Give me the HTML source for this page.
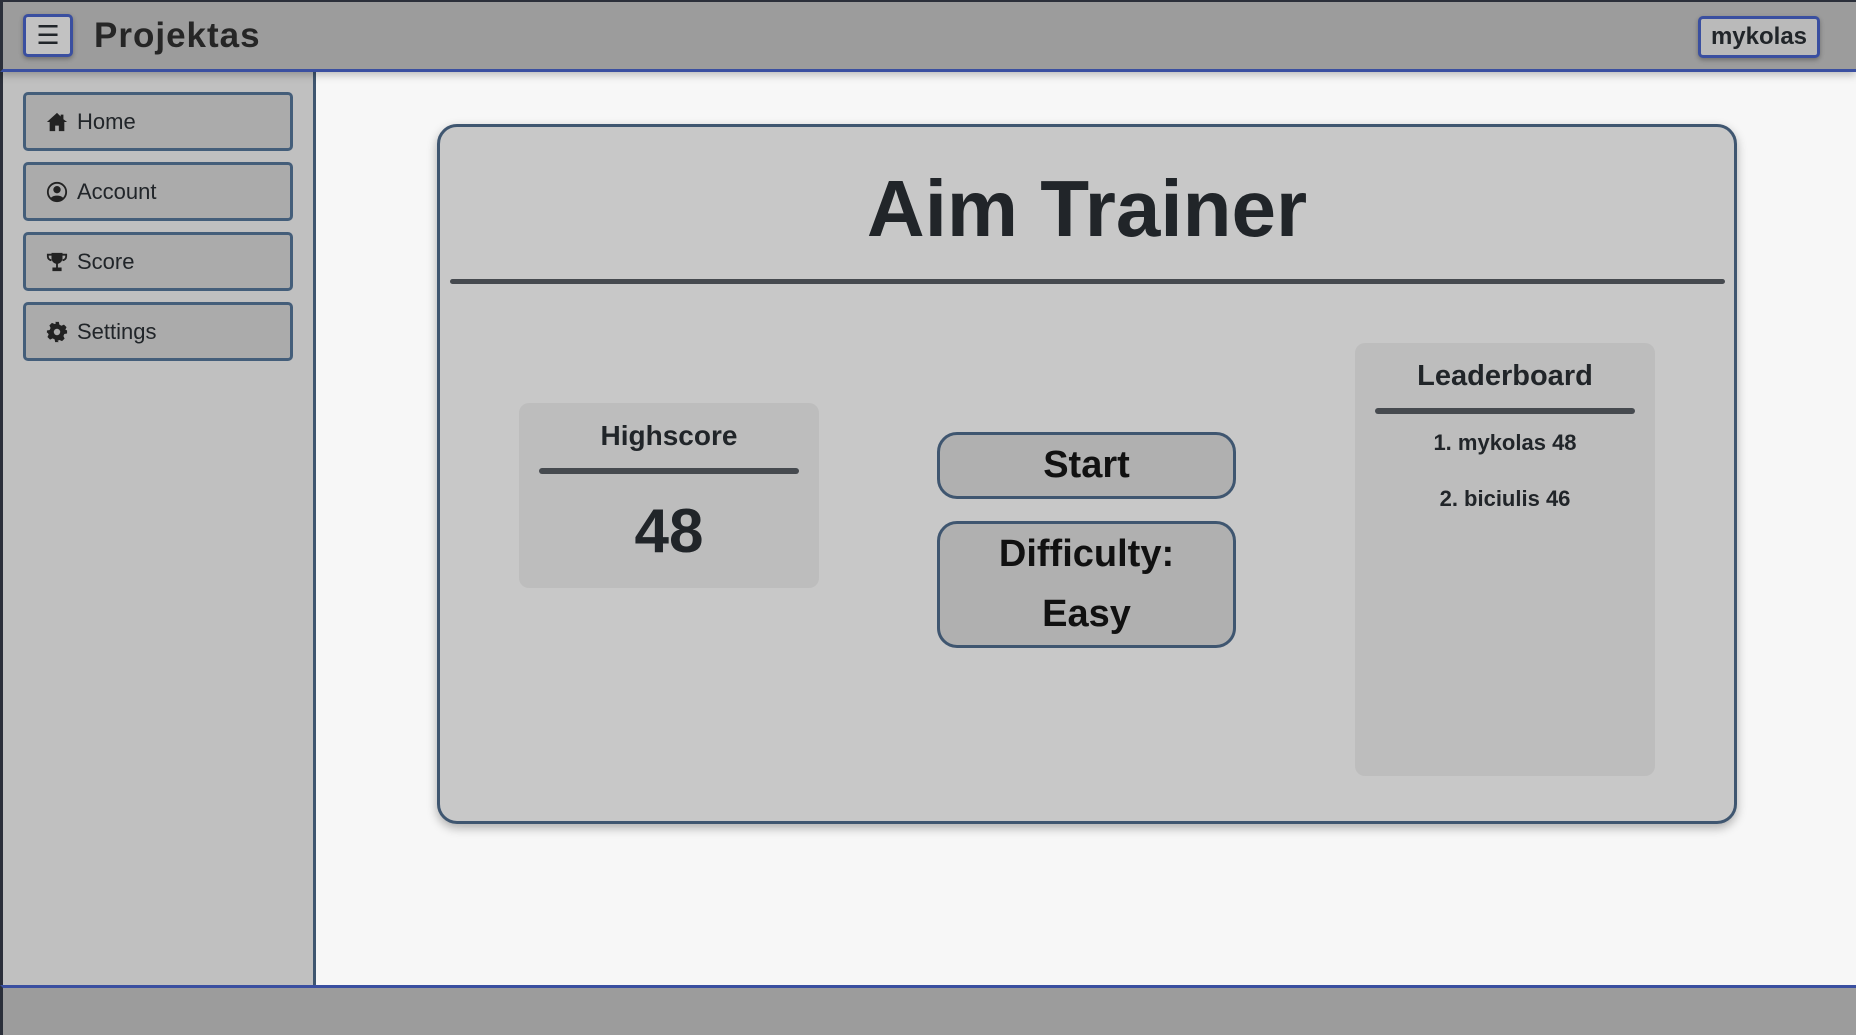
<!DOCTYPE html>
<html><head><meta charset="utf-8"><style>
*{box-sizing:border-box;margin:0;padding:0}
body{width:1856px;height:1035px;overflow:hidden;background:#f7f7f7;font-family:"Liberation Sans",Arial,sans-serif;color:#212529;position:relative}
.abs{position:absolute}
#hdr{left:0;top:0;width:1856px;height:72px;background:#9c9c9c;border-top:2px solid #2b2f3a;border-left:3px solid #2b2f3a;border-bottom:3px solid #3a4fa0;box-shadow:0 3px 8px rgba(0,0,0,.25);z-index:2}
#side{left:0;top:72px;width:316px;height:915px;background:#c0c0c0;border-left:3px solid #2b2f3a;border-right:3px solid #3f5670}
#foot{left:0;top:985px;width:1856px;height:50px;background:#9c9c9c;border-top:3px solid #3a4fa0;border-left:3px solid #2b2f3a}
.nav{position:absolute;left:20px;width:270px;height:59px;border:3px solid #445e7a;border-radius:5px;background:#ababab;font-size:22px;display:flex;align-items:center;padding-left:20px}
.nav svg{width:22px;height:22px;margin-right:9px}
.box{background:#bdbdbd;border-radius:10px;text-align:center;font-weight:bold}
.btn{background:#b0b0b0;border:3px solid #3f5670;border-radius:20px;text-align:center;font-weight:bold;color:#111}
.line{position:absolute;height:5px;background:#464a4f;border-radius:3px}
</style></head><body>
<div id="hdr" class="abs">
 <div class="abs" style="left:20px;top:12px;width:50px;height:43px;border:3px solid #3a4fa0;border-radius:5px;background:#c2c2c2;font-size:26px;text-align:center;line-height:36px;box-shadow:0 2px 5px rgba(0,0,0,.3)">☰</div>
 <div class="abs" style="left:91px;top:14px;font-size:35px;font-weight:bold;letter-spacing:1px;color:#262626">Projektas</div>
 <div class="abs" style="left:1695px;top:14px;width:122px;height:42px;border:3px solid #3a4fa0;border-radius:5px;background:#bababa;font-size:24px;font-weight:bold;text-align:center;line-height:36px;box-shadow:0 2px 5px rgba(0,0,0,.3)">mykolas</div>
</div>
<div id="side" class="abs">
 <div class="nav" style="top:20px"><svg viewBox="0 0 24 24"><path d="M12 2L1 12h3v10h6v-6h4v6h6V12h3L19 9V4h-3v2z" fill="#222"/></svg>Home</div>
 <div class="nav" style="top:90px"><svg viewBox="0 0 24 24"><circle cx="12" cy="12" r="10" fill="none" stroke="#222" stroke-width="2"/><circle cx="12" cy="9.5" r="4" fill="#222"/><path d="M5 19c2-4 12-4 14 0a10 10 0 0 1-14 0z" fill="#222"/></svg>Account</div>
 <div class="nav" style="top:160px"><svg viewBox="0 0 24 24"><path d="M6 2h12v6a6 6 0 0 1-5 6v4h4v4H7v-4h4v-4a6 6 0 0 1-5-6z" fill="#222"/><path d="M6 4H2v2a4 4 0 0 0 4 4M18 4h4v2a4 4 0 0 1-4 4" fill="none" stroke="#222" stroke-width="2"/></svg>Score</div>
 <div class="nav" style="top:230px"><svg viewBox="0 0 24 24"><path d="M10 1h4l.6 3 2.2 1.2 2.8-1.3 2.8 2.8-1.3 2.8L22.3 10l.7.4v3.2l-3 .6-1 2.2 1.3 2.8-2.8 2.8-2.8-1.3-2.2 1L14 23h-4l-.6-3-2.2-1-2.8 1.3-2.8-2.8L2.9 14.7 1.7 12.5 1 13.6v-3.2l3-.6 1-2.2L3.7 4.8l2.8-2.8 2.8 1.3L11 2.4z" fill="#222"/><circle cx="12" cy="12" r="3.5" fill="#ababab"/></svg>Settings</div>
</div>
<div id="foot" class="abs"></div>

<div class="abs" style="left:437px;top:124px;width:1300px;height:700px;background:#c8c8c8;border:3px solid #3f5670;border-radius:20px;box-shadow:0 4px 10px rgba(0,0,0,.3)">
 <div class="abs" style="left:0;width:1294px;top:32px;text-align:center;font-size:80px;font-weight:bold;line-height:100px;color:#212529">Aim Trainer</div>
 <div class="line" style="left:10px;width:1275px;top:152px;height:5px"></div>
 <div class="abs box" style="left:79px;top:276px;width:300px;height:185px">
  <div style="font-size:28px;padding-top:15px;line-height:36px">Highscore</div>
  <div class="line" style="left:20px;width:260px;top:65px;height:6px"></div>
  <div style="font-size:62px;margin-top:43px;line-height:70px">48</div>
 </div>
 <div class="abs btn" style="left:497px;top:305px;width:299px;height:67px;font-size:38px;line-height:60px">Start</div>
 <div class="abs btn" style="left:497px;top:394px;width:299px;height:127px;font-size:38px;line-height:60px">Difficulty:<br>Easy</div>
 <div class="abs box" style="left:915px;top:216px;width:300px;height:433px">
  <div style="font-size:29px;padding-top:15px;line-height:36px">Leaderboard</div>
  <div class="line" style="left:20px;width:260px;top:65px;height:6px"></div>
  <div style="font-size:22px;margin-top:34px;line-height:30px">1. mykolas 48</div>
  <div style="font-size:22px;margin-top:26px;line-height:30px">2. biciulis 46</div>
 </div>
</div>
</body></html>
